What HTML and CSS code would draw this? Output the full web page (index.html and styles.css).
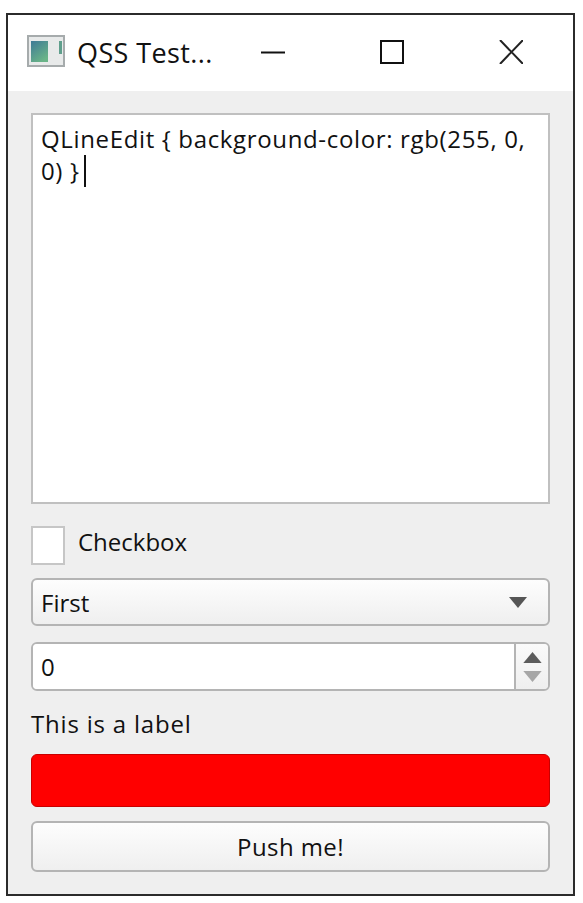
FILE: index.html
```html
<!DOCTYPE html>
<html lang="en">

<head>
    <meta charset="UTF-8">
    <title>QSS Test</title>
    <link rel="stylesheet" href="styles.css">
</head>

<body>
    <div class="window">
        <div class="titlebar">
            <svg class="app-icon" viewBox="0 0 38 32">
                <defs>
                    <linearGradient id="pane" x1="0" y1="0" x2="0.6" y2="1">
                        <stop offset="0" stop-color="#3f7a96"/>
                        <stop offset="1" stop-color="#6ab488"/>
                    </linearGradient>
                </defs>
                <rect x="1" y="1" width="36" height="30" fill="#e8eaea" stroke="#a6abac" stroke-width="2"/>
                <rect x="4" y="6" width="17" height="21" fill="url(#pane)"/>
                <rect x="32" y="6" width="3" height="13" fill="#5f9f8c"/>
            </svg>
            <span class="title">QSS Test...</span>
            <div class="caption-btns">
                <svg class="caption-btn" viewBox="0 0 24 24"><path d="M0 12.5H24" stroke="#111" stroke-width="2" fill="none"/></svg>
                <svg class="caption-btn" viewBox="0 0 24 24"><rect x="1" y="1" width="22" height="22" stroke="#111" stroke-width="2" fill="none"/></svg>
                <svg class="caption-btn" viewBox="0 0 24 24"><path d="M1 0L24 24M24 0L1 24" stroke="#222" stroke-width="2" fill="none"/></svg>
            </div>
        </div>
        <div class="content">
            <div class="text-edit">QLineEdit { background-color: rgb(255, 0, 0) }<span class="caret"></span></div>
            <div class="check-row">
                <span class="check-box"></span>
                <span class="check-text">Checkbox</span>
            </div>
            <div class="combo">
                <span>First</span>
                <svg class="combo-arrow" viewBox="0 0 20 12"><path d="M0 0H20L10 12Z" fill="#555"/></svg>
            </div>
            <div class="spin">
                <div class="spin-value">0</div>
                <div class="spin-btns">
                    <svg class="spin-arrow" viewBox="0 0 20 12"><path d="M10 0L20 12H0Z" fill="#5c5c5c"/></svg>
                    <svg class="spin-arrow" viewBox="0 0 20 12"><path d="M0 0H20L10 12Z" fill="#a6a6a6"/></svg>
                </div>
            </div>
            <div class="label">This is a label</div>
            <div class="red-edit"></div>
            <div class="push-btn">Push me!</div>
        </div>
    </div>
</body>

</html>
```

FILE: styles.css
```css
* {
    box-sizing: border-box;
    padding: 0;
    margin: 0;
}

body {
    width: 583px;
    height: 903px;
    padding: 13px 8px 7px 6px;
    background-color: #fff;
    font-family: "Open Sans", "Noto Sans", sans-serif;
    font-size: 24px;
    color: #111;
    overflow: hidden;
}

.window {
    display: flex;
    flex-direction: column;
    height: 100%;
    border: 2px solid #2b2b2b;
    background-color: #efefef;
}

.titlebar {
    display: flex;
    align-items: center;
    height: 76px;
    padding-left: 19px;
    background-color: #fff;
}

.app-icon {
    width: 38px;
    height: 32px;
    margin-right: 12px;
    margin-bottom: 4px;
}

.title {
    width: 150px;
    margin-bottom: 2px;
    font-size: 27px;
    letter-spacing: 0.4px;
    white-space: nowrap;
}

.caption-btns {
    display: flex;
    gap: 95px;
    margin-left: 34px;
    margin-bottom: 2px;
}

.caption-btn {
    width: 24px;
    height: 24px;
}

.content {
    display: flex;
    flex-direction: column;
    flex: 1;
    padding: 22px 23px 0;
}

.text-edit {
    height: 391px;
    padding: 8px 8px;
    border: 2px solid #c0c0c0;
    background-color: #fff;
    letter-spacing: 0.65px;
    line-height: 32px;
}

.caret {
    display: inline-block;
    width: 2px;
    height: 32px;
    margin-left: 4px;
    background-color: #111;
    vertical-align: top;
}

.check-row {
    display: flex;
    align-items: center;
    gap: 13px;
    height: 39px;
    margin-top: 22px;
}

.check-box {
    width: 34px;
    height: 39px;
    border: 2px solid #c6c6c6;
    background-color: #fff;
}

.check-text {
    margin-bottom: 8px;
}

.combo {
    display: flex;
    align-items: center;
    justify-content: space-between;
    height: 48px;
    margin-top: 13px;
    padding: 0 21px 0 8px;
    border: 2px solid #b4b4b4;
    border-radius: 6px;
    background: linear-gradient(#fdfdfd, #efefef);
}

.combo-arrow {
    width: 18px;
    height: 11px;
}

.spin {
    display: flex;
    height: 49px;
    margin-top: 16px;
    border: 2px solid #b4b4b4;
    border-radius: 6px;
    overflow: hidden;
}

.spin-value {
    flex: 1;
    padding-left: 8px;
    line-height: 45px;
    background-color: #fff;
}

.spin-btns {
    display: flex;
    flex-direction: column;
    align-items: center;
    justify-content: center;
    gap: 8px;
    width: 34px;
    border-left: 2px solid #b4b4b4;
    background: linear-gradient(#fafafa, #efefef);
}

.spin-arrow {
    width: 19px;
    height: 11px;
}

.label {
    height: 32px;
    margin-top: 17px;
    letter-spacing: 0.8px;
    line-height: 32px;
}

.red-edit {
    height: 53px;
    margin-top: 14px;
    border: 1px solid #c80000;
    border-radius: 6px;
    background-color: #f00;
}

.push-btn {
    height: 51px;
    margin-top: 14px;
    border: 2px solid #b4b4b4;
    border-radius: 6px;
    background: linear-gradient(#fdfdfd, #efefef);
    letter-spacing: 0.4px;
    line-height: 48px;
    text-align: center;
}
```
